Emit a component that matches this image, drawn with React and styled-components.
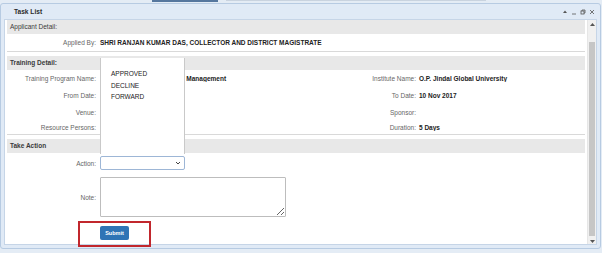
import React from 'react';
import styled, { createGlobalStyle } from 'styled-components';

const GlobalStyle = createGlobalStyle`
  html, body { margin: 0; padding: 0; background: #e4ecf5; }
  body { font-family: "Liberation Sans", Arial, sans-serif; font-size: 6.5px; color: #333; }
  * { box-sizing: border-box; }
`;

const Page = styled.div`
  width: 602px;
  height: 253px;
  display: flex;
  flex-direction: column;
  overflow: hidden;
`;

const TopStrip = styled.div`
  height: 3px;
  display: flex;
  align-items: flex-start;
  gap: 8px;
  padding-left: 152px;
`;

const TabBar = styled.div`
  width: ${p => p.$w}px;
  height: ${p => p.$h}px;
  background: ${p => p.$c};
`;

const Window = styled.div`
  height: 246px;
  margin-right: 1px;
  border: 1px solid #b7cbe2;
  border-radius: 3px;
  background: #e0eaf6;
  padding: 0 3px 3px 3px;
  display: flex;
  flex-direction: column;
`;

const TitleBar = styled.div`
  height: 15px;
  display: flex;
  align-items: center;
  justify-content: space-between;
  padding: 0 2px 0 10px;
`;

const Title = styled.span`
  font-weight: bold;
  font-size: 6.6px;
  color: #2b2b2b;
`;

const Controls = styled.div`
  display: flex;
  gap: 3px;
  align-items: center;
`;

const Body = styled.div`
  flex: 1;
  display: flex;
  background: #fff;
  border: 1px solid #c6d5e7;
  min-height: 0;
`;

const Content = styled.div`
  flex: 1;
  padding: 0 2px;
  display: flex;
  flex-direction: column;
`;

const SectionHead = styled.div`
  height: 14px;
  line-height: 14px;
  background: #e8e8e8;
  padding-left: 3px;
  margin-top: ${p => p.$top || 0}px;
  font-weight: ${p => (p.$bold ? 'bold' : 'normal')};
  color: #3a3a3a;
`;

const InfoRow = styled.div`
  display: grid;
  grid-template-columns: 93px 200px 116px 1fr;
  align-items: center;
  height: ${p => p.$h}px;
`;

const Label = styled.span`
  text-align: right;
  padding-right: ${p => p.$pad}px;
  color: #666;
  white-space: nowrap;
`;

const Value = styled.span`
  padding-left: ${p => p.$pad}px;
  font-weight: bold;
  color: #222;
  white-space: nowrap;
  overflow: ${p => (p.$wide ? 'visible' : 'hidden')};
`;

const Separator = styled.div`
  border-bottom: 1px solid #d9d9d9;
`;

const FormRow = styled.div`
  display: grid;
  grid-template-columns: 93px 1fr;
  align-items: center;
  margin-top: ${p => p.$top}px;
`;

const Field = styled.div`
  position: relative;
`;

const SelectBox = styled.div`
  width: 85px;
  height: 14px;
  border: 1px solid #9db6d6;
  border-radius: 2px;
  background: #fff;
  display: flex;
  align-items: center;
  justify-content: flex-end;
  padding-right: 3px;
`;

const OptionList = styled.div`
  position: absolute;
  left: 0;
  bottom: calc(100% + 2px);
  width: 85px;
  height: 96px;
  background: #fff;
  border-left: 1px solid #c9c9c9;
  border-right: 1px solid #c9c9c9;
  padding: 10px 0 0 10px;
  z-index: 2;
`;

const Option = styled.div`
  line-height: 11.5px;
  color: #222;
`;

const NoteArea = styled.textarea`
  width: 186px;
  height: 40px;
  border: 1px solid #bdbdbd;
  border-radius: 1px;
  display: block;
  margin: 0;
  padding: 2px;
  font-family: inherit;
  font-size: 6.5px;
`;

const SubmitWrap = styled.div`
  position: relative;
  margin-top: 9px;
  margin-left: 93px;
  width: 29px;
`;

const SubmitButton = styled.button`
  width: 29px;
  height: 14px;
  padding: 0;
  border: none;
  border-radius: 2px;
  background: #2f74b5;
  color: #fff;
  font-family: inherit;
  font-size: 5.5px;
  font-weight: bold;
  display: block;
`;

const Highlight = styled.div`
  position: absolute;
  left: -22px;
  top: -5px;
  width: 73px;
  height: 26px;
  border: 2px solid #c1272d;
  pointer-events: none;
`;

const Scrollbar = styled.div`
  width: 9px;
  display: flex;
  flex-direction: column;
  background: #f0f0f0;
  border-left: 1px solid #e6e6e6;
`;

const ScrollArrow = styled.div`
  height: ${p => p.$h}px;
  display: flex;
  align-items: center;
  justify-content: center;
`;

const Thumb = styled.div`
  flex: 1;
  margin: 13px 1px 2px 1px;
  background: #c6c6c6;
`;

const Tri = ({ down }) => (
  <svg width="5" height="3" viewBox="0 0 5 3">
    <path d={down ? 'M0 0h5L2.5 3z' : 'M0 3h5L2.5 0z'} fill="#555" />
  </svg>
);

const WinIcon = ({ kind }) => (
  <svg width="6" height="6" viewBox="0 0 6 6" fill="none" stroke="#555" strokeWidth="0.8">
    {kind === 'up' && <path d="M1 4h4L3 1.5z" fill="#555" stroke="none" />}
    {kind === 'min' && <path d="M1 5h4" />}
    {kind === 'max' && (
      <>
        <rect x="1" y="2" width="3" height="3" />
        <path d="M2 2V1h3v3H4" />
      </>
    )}
    {kind === 'close' && <path d="M1 1l4 4M5 1L1 5" />}
  </svg>
);

const Chevron = () => (
  <svg width="6" height="4" viewBox="0 0 6 4" fill="none" stroke="#444" strokeWidth="1">
    <path d="M1 1l2 2 2-2" />
  </svg>
);

export default function App() {
  return (
    <Page>
      <GlobalStyle />
      <TopStrip>
        <TabBar $w={66} $h={2} $c="#56779e" />
        <TabBar $w={260} $h={1} $c="#c9d3df" />
      </TopStrip>
      <Window>
        <TitleBar>
          <Title>Task List</Title>
          <Controls>
            <WinIcon kind="up" />
            <WinIcon kind="min" />
            <WinIcon kind="max" />
            <WinIcon kind="close" />
          </Controls>
        </TitleBar>
        <Body>
          <Content>
            <SectionHead>Applicant Detail:</SectionHead>
            <InfoRow $h={17}>
              <Label $pad={4}>Applied By:</Label>
              <Value $pad={0} $wide>SHRI RANJAN KUMAR DAS, COLLECTOR AND DISTRICT MAGISTRATE</Value>
            </InfoRow>
            <Separator />

            <SectionHead $top={4} $bold>Training Detail:</SectionHead>
            <InfoRow $h={17}>
              <Label $pad={4}>Training Program Name:</Label>
              <Value $pad={0}>Public Policy Leadership in Management</Value>
              <Label $pad={0}>Institute Name:</Label>
              <Value $pad={3}>O.P. Jindal Global University</Value>
            </InfoRow>
            <InfoRow $h={17}>
              <Label $pad={4}>From Date:</Label>
              <Value $pad={0}></Value>
              <Label $pad={0}>To Date:</Label>
              <Value $pad={3}>10 Nov 2017</Value>
            </InfoRow>
            <InfoRow $h={17}>
              <Label $pad={4}>Venue:</Label>
              <Value $pad={0}></Value>
              <Label $pad={0}>Sponsor:</Label>
              <Value $pad={3}></Value>
            </InfoRow>
            <InfoRow $h={13}>
              <Label $pad={4}>Resource Persons:</Label>
              <Value $pad={0}></Value>
              <Label $pad={0}>Duration:</Label>
              <Value $pad={3}>5 Days</Value>
            </InfoRow>
            <Separator />

            <SectionHead $top={4} $bold>Take Action</SectionHead>
            <FormRow $top={3}>
              <Label $pad={4}>Action:</Label>
              <Field>
                <OptionList>
                  <Option>APPROVED</Option>
                  <Option>DECLINE</Option>
                  <Option>FORWARD</Option>
                </OptionList>
                <SelectBox>
                  <Chevron />
                </SelectBox>
              </Field>
            </FormRow>
            <FormRow $top={7}>
              <Label $pad={4}>Note:</Label>
              <Field>
                <NoteArea />
              </Field>
            </FormRow>
            <SubmitWrap>
              <SubmitButton>Submit</SubmitButton>
              <Highlight />
            </SubmitWrap>
          </Content>
          <Scrollbar>
            <ScrollArrow $h={9}><Tri /></ScrollArrow>
            <Thumb />
            <ScrollArrow $h={6}><Tri down /></ScrollArrow>
          </Scrollbar>
        </Body>
      </Window>
    </Page>
  );
}
